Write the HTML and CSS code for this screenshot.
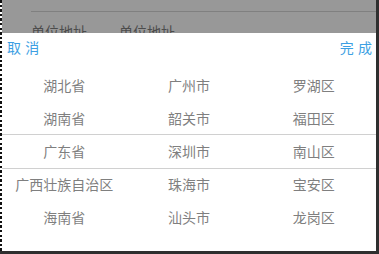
FILE: index.html
```html
<!DOCTYPE html>
<html lang="zh-CN">
<head>
  <meta charset="UTF-8">
  <meta name="viewport" content="width=device-width, initial-scale=1.0">
  <link rel="stylesheet" href="styles.css">
</head>
<body>

<div class="screen">
  <div class="edge"></div>
  <div class="main">
    <!-- page behind the popup, dimmed -->
    <div class="backdrop">
      <div class="backdrop-line"></div>
      <div class="tabs">
        <span class="tab">单位地址</span>
        <span class="tab">单位地址</span>
      </div>
    </div>

    <div class="picker">
      <div class="toolbar">
        <span class="btn">取 消</span>
        <span class="btn">完 成</span>
      </div>
      <div class="wheels">
        <div class="band"></div>
        <div class="wheel">
          <div class="item">湖北省</div>
          <div class="item">湖南省</div>
          <div class="item">广东省</div>
          <div class="item">广西壮族自治区</div>
          <div class="item">海南省</div>
        </div>
        <div class="wheel">
          <div class="item">广州市</div>
          <div class="item">韶关市</div>
          <div class="item">深圳市</div>
          <div class="item">珠海市</div>
          <div class="item">汕头市</div>
        </div>
        <div class="wheel">
          <div class="item">罗湖区</div>
          <div class="item">福田区</div>
          <div class="item">南山区</div>
          <div class="item">宝安区</div>
          <div class="item">龙岗区</div>
        </div>
      </div>
    </div>
  </div>
</div>

</body>
</html>
```

FILE: styles.css
```css
body {
  margin: 0;
  width: 379px;
  height: 254px;
  background-color: #2f2f2f;
  font-family: "Noto Sans CJK SC", "Noto Sans", sans-serif;
  overflow: hidden;
}

.screen {
  display: flex;
  width: 376px;
  height: 251px;
}

.edge {
  width: 2px;
  background: repeating-linear-gradient(to bottom, #111 0, #111 2.5px, #fff 2.5px, #fff 4.6px);
}

.main {
  flex: 1;
  display: flex;
  flex-direction: column;
}

.backdrop {
  height: 33px;
  background-color: #989898;
  padding-left: 29px;
  overflow: hidden;
}

.backdrop-line {
  margin-top: 11px;
  border-top: 1px solid #808080;
}

.tabs {
  display: flex;
  gap: 32px;
  margin-top: 9px;
  font-size: 14px;
  line-height: 20px;
  color: #4c4c4c;
}

.picker {
  flex: 1;
  background-color: #fff;
}

.toolbar {
  height: 28px;
  display: flex;
  justify-content: space-between;
  align-items: center;
  padding: 0 4px 0 5px;
  font-size: 14px;
  color: #3d9fe3;
}

.btn {
  word-spacing: 1px;
}

.wheels {
  position: relative;
  display: flex;
  padding-top: 8px;
}

/* selection band of the picker */
.band {
  position: absolute;
  left: 0;
  right: 0;
  top: 73px;
  height: 33px;
  border-top: 1px solid #d0d0d0;
  border-bottom: 1px solid #d0d0d0;
}

.wheel {
  flex: 1;
}

.item {
  height: 33px;
  line-height: 33px;
  text-align: center;
  font-size: 14px;
  color: #7f7f7f;
}
```
